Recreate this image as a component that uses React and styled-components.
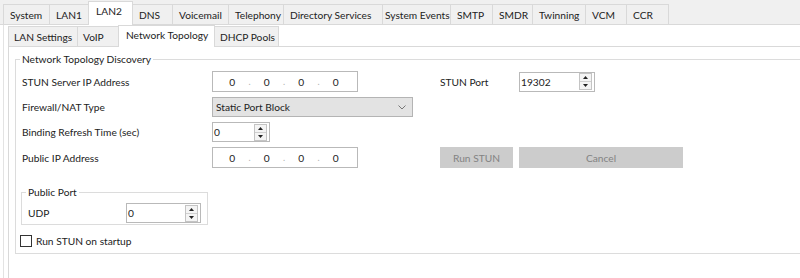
import React from "react";
import styled, { createGlobalStyle } from "styled-components";

const GlobalStyle = createGlobalStyle`
    html, body {
        margin: 0;
        background: #ffffff;
        overflow: hidden;
    }
    body {
        font-family: Lato, "Noto Sans", sans-serif;
        font-size: 10.2px;
        color: #222222;
    }
`;

// name, width, active, left padding
const topTabs = [
    ["System", 46],
    ["LAN1", 39],
    ["LAN2", 44, true],
    ["DNS", 40],
    ["Voicemail", 56],
    ["Telephony", 55],
    ["Directory Services", 99],
    ["System Events", 68, false, 2],
    ["SMTP", 42],
    ["SMDR", 40],
    ["Twinning", 53],
    ["VCM", 41],
    ["CCR", 42],
];

const subTabs = [
    ["LAN Settings", 69],
    ["VoIP", 41],
    ["Network Topology", 96, true],
    ["DHCP Pools", 64],
];

function SpinArrows() {
    return (
        <SpinButtons>
            <SpinBtn>
                <svg width="5" height="3" viewBox="0 0 5 3">
                    <polygon points="0,3 2.5,0 5,3" fill="#222" />
                </svg>
            </SpinBtn>
            <SpinBtn>
                <svg width="5" height="3" viewBox="0 0 5 3">
                    <polygon points="0,0 2.5,3 5,0" fill="#222" />
                </svg>
            </SpinBtn>
        </SpinButtons>
    );
}

function SpinBox({ value, width }) {
    return (
        <Spin $w={width}>
            <SpinText>{value}</SpinText>
            <SpinArrows />
        </Spin>
    );
}

function IpBox() {
    return (
        <Ip>
            <IpPart>0</IpPart>
            <IpDot>.</IpDot>
            <IpPart>0</IpPart>
            <IpDot>.</IpDot>
            <IpPart>0</IpPart>
            <IpDot>.</IpDot>
            <IpPart>0</IpPart>
        </Ip>
    );
}

function App() {
    return (
        <>
            <GlobalStyle />
            <Page>
                <TopBar>
                    {topTabs.map(([name, w, active, pad]) => (
                        <TopTab key={name} $w={w} $active={active} $pad={pad}>
                            {name}
                        </TopTab>
                    ))}
                </TopBar>
                <OuterPanel>
                    <SubBar>
                        {subTabs.map(([name, w, active]) => (
                            <SubTab key={name} $w={w} $active={active}>
                                {name}
                            </SubTab>
                        ))}
                    </SubBar>
                    <SubBody>
                        <GroupBox>
                            <GroupTitle>Network Topology Discovery</GroupTitle>
                            <FormGrid>
                                <Label>STUN Server IP Address</Label>
                                <Cell>
                                    <IpBox />
                                </Cell>
                                <Label>STUN Port</Label>
                                <Cell>
                                    <SpinBox value="19302" width={76} />
                                </Cell>

                                <Label>Firewall/NAT Type</Label>
                                <Cell $span={3}>
                                    <Select>
                                        <span>Static Port Block</span>
                                        <svg width="8" height="5" viewBox="0 0 8 5">
                                            <polyline
                                                points="0.5,0.5 4,4 7.5,0.5"
                                                fill="none"
                                                stroke="#777"
                                                strokeWidth="1"
                                            />
                                        </svg>
                                    </Select>
                                </Cell>

                                <Label>Binding Refresh Time (sec)</Label>
                                <Cell $span={3}>
                                    <SpinBox value="0" width={58} />
                                </Cell>

                                <Label>Public IP Address</Label>
                                <Cell>
                                    <IpBox />
                                </Cell>
                                <Cell>
                                    <Button $w={73} disabled>Run STUN</Button>
                                </Cell>
                                <Cell>
                                    <Button $w={164} disabled>Cancel</Button>
                                </Cell>
                            </FormGrid>

                            <PortBox>
                                <GroupTitle>Public Port</GroupTitle>
                                <PortRow>
                                    <Label>UDP</Label>
                                    <SpinBox value="0" width={75} />
                                </PortRow>
                            </PortBox>

                            <CheckRow>
                                <CheckBox />
                                <span>Run STUN on startup</span>
                            </CheckRow>
                        </GroupBox>
                    </SubBody>
                </OuterPanel>
            </Page>
        </>
    );
}

export default App;

const Page = styled.div`
    width: 800px;
    height: 278px;
    display: flex;
    flex-direction: column;
    overflow: hidden;
`;

const TopBar = styled.div`
    height: 24px;
    flex: none;
    display: flex;
    align-items: flex-end;
    padding-left: 3px;
    background: #f0f0f0;
    border-bottom: 1px solid #d9d9d9;
`;

const TopTab = styled.div`
    box-sizing: border-box;
    width: ${(p) => p.$w + 1}px;
    margin-right: -1px;
    height: ${(p) => (p.$active ? 24 : 20)}px;
    margin-bottom: ${(p) => (p.$active ? -1 : 0)}px;
    padding-top: ${(p) => (p.$active ? 2 : 3)}px;
    padding-left: ${(p) => p.$pad ?? (p.$active ? 7 : 6)}px;
    background: ${(p) => (p.$active ? "#ffffff" : "#f0f0f0")};
    border: 1px solid #d9d9d9;
    border-bottom: none;
    position: relative;
    z-index: ${(p) => (p.$active ? 1 : 0)};
    white-space: nowrap;
    line-height: 14px;
`;

const OuterPanel = styled.div`
    flex: 1;
    margin-left: 3px;
    padding-left: 4px;
    border-left: 1px solid #e3e3e3;
    display: flex;
    flex-direction: column;
`;

const SubBar = styled.div`
    height: 21px;
    flex: none;
    display: flex;
    align-items: flex-end;
    border-bottom: 1px solid #d9d9d9;
`;

const SubTab = styled(TopTab)`
    height: ${(p) => (p.$active ? 22 : 20)}px;
    padding-left: ${(p) => (p.$active ? 7 : 5)}px;
`;

const SubBody = styled.div`
    flex: 1;
    border-left: 1px solid #d9d9d9;
    padding: 5px 0 0 6px;
`;

const GroupBox = styled.fieldset`
    box-sizing: border-box;
    width: 900px;
    margin: 0;
    padding: 5px 0 6px 6px;
    border: 1px solid #dcdcdc;
    min-width: 0;
`;

const GroupTitle = styled.legend`
    padding: 0 2px;
    margin-left: -2px;
    line-height: 14px;
`;

const FormGrid = styled.div`
    display: grid;
    grid-template-columns: 190px 228px 79px 165px;
    grid-template-rows: 21px 20px 20px 21px;
    row-gap: 5px;
    align-items: center;
`;

const Label = styled.div`
    white-space: nowrap;
`;

const Cell = styled.div`
    display: flex;
    align-items: center;
    height: 100%;
    grid-column: span ${(p) => p.$span || 1};
`;

const Ip = styled.div`
    box-sizing: border-box;
    width: 146px;
    height: 21px;
    border: 1px solid #b9b9b9;
    background: #ffffff;
    display: grid;
    grid-template-columns: 1fr 4px 1fr 4px 1fr 4px 1fr;
    align-items: center;
    padding: 0 6px 0 4px;
`;

const IpPart = styled.span`
    text-align: center;
`;

const IpDot = styled.span`
    color: #b0b0b0;
    text-align: center;
    font-size: 9px;
`;

const Spin = styled.div`
    box-sizing: border-box;
    width: ${(p) => p.$w}px;
    height: 20px;
    border: 1px solid #b9b9b9;
    background: #ffffff;
    display: flex;
    align-items: center;
    justify-content: space-between;
    padding: 0 2px 0 1px;
`;

const SpinText = styled.span`
    line-height: 14px;
`;

const SpinButtons = styled.div`
    display: flex;
    flex-direction: column;
    width: 11px;
    height: 15px;
    border: 1px solid #c4c4c4;
    background: #f4f4f4;
`;

const SpinBtn = styled.div`
    flex: 1;
    display: flex;
    align-items: center;
    justify-content: center;
    & + & {
        border-top: 1px solid #d0d0d0;
    }
`;

const Select = styled.div`
    box-sizing: border-box;
    width: 201px;
    height: 20px;
    border: 1px solid #b4b4b4;
    background: #e3e3e3;
    display: flex;
    align-items: center;
    justify-content: space-between;
    padding: 0 6px 0 3px;
`;

const Button = styled.button`
    box-sizing: border-box;
    width: ${(p) => p.$w}px;
    height: 21px;
    border: none;
    background: #cccccc;
    color: #838383;
    font: inherit;
    padding: 0;
`;

const PortBox = styled.fieldset`
    box-sizing: border-box;
    width: 187px;
    margin: 17px 0 0 -1px;
    padding: 4px 0 1px 6px;
    border: 1px solid #dcdcdc;
    min-width: 0;
`;

const PortRow = styled.div`
    display: grid;
    grid-template-columns: 98px 75px;
    align-items: center;
`;

const CheckRow = styled.div`
    display: flex;
    align-items: center;
    gap: 4px;
    margin: 10px 0 0 -2px;
`;

const CheckBox = styled.div`
    box-sizing: border-box;
    width: 12px;
    height: 12px;
    border: 1px solid #333333;
    background: #ffffff;
`;
